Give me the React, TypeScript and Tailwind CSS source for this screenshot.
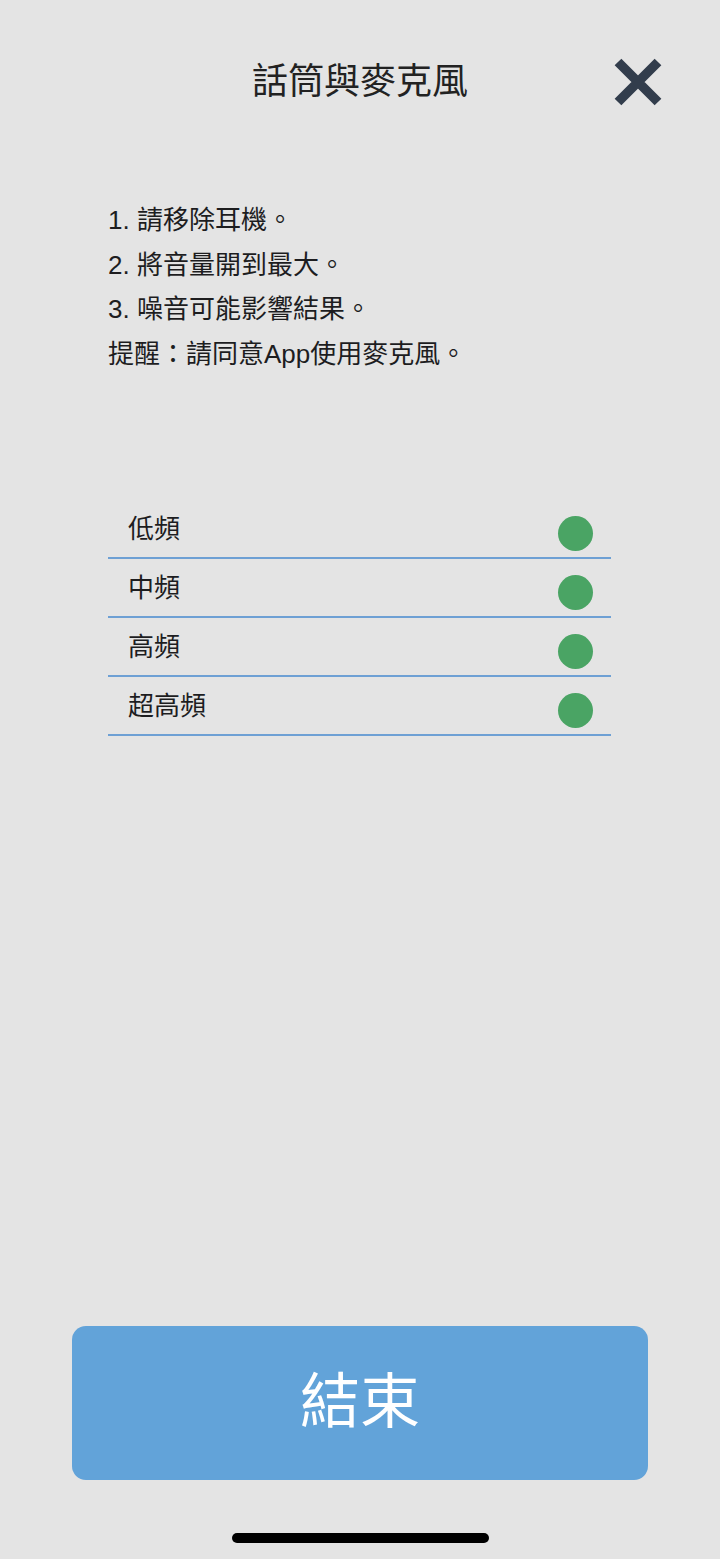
const font = { fontFamily: '"Liberation Sans", "Noto Sans CJK TC", sans-serif' };

const steps = ['1. 請移除耳機。', '2. 將音量開到最大。', '3. 噪音可能影響結果。', '提醒：請同意App使用麥克風。'];
const bands = ['低頻', '中頻', '高頻', '超高頻'];

function CloseIcon() {
    return (
        <svg width="50" height="50" viewBox="0 0 50 50">
            <path d="M5 5 L45 45 M45 5 L5 45" stroke="#323d4c" strokeWidth="9.5" strokeLinecap="butt" fill="none" />
        </svg>
    );
}

export default function App() {
    return (
        <div className="flex min-h-[1559px] w-[720px] flex-col bg-[#e4e4e4] text-[#1d1d1f]" style={font}>
            {/* Header */}
            <div className="grid grid-cols-[1fr_auto_1fr] items-center pt-[56px]">
                <div />
                <h1 className="text-[36px] leading-[52px] font-normal text-[#222]">話筒與麥克風</h1>
                <div className="flex justify-end pr-[57px]">
                    <CloseIcon />
                </div>
            </div>

            {/* Instructions */}
            <div className="mt-[90px] pl-[108px] text-[26px] leading-[44.5px]">
                {steps.map((s) => (
                    <p key={s}>{s}</p>
                ))}
            </div>

            {/* Frequency bands */}
            <div className="mx-[108px] mt-[124px] w-[503px]">
                {bands.map((b) => (
                    <div key={b} className="flex h-[59px] items-center justify-between border-b-2 border-[#6ea0d4] pr-[18px] pl-[20px]">
                        <span className="text-[26px] leading-none">{b}</span>
                        <span className="mt-[10px] h-[35px] w-[35px] rounded-full bg-[#4aa464]" />
                    </div>
                ))}
            </div>

            <div className="flex-1" />

            {/* End button */}
            <button type="button" className="mx-[72px] flex h-[154px] items-center justify-center rounded-[14px] bg-[#62a3d9] text-[60px] text-white">
                結束
            </button>

            <div className="flex h-[79px] justify-center pt-[53px]">
                <div className="h-[10px] w-[257px] rounded-full bg-black" />
            </div>
        </div>
    );
}
